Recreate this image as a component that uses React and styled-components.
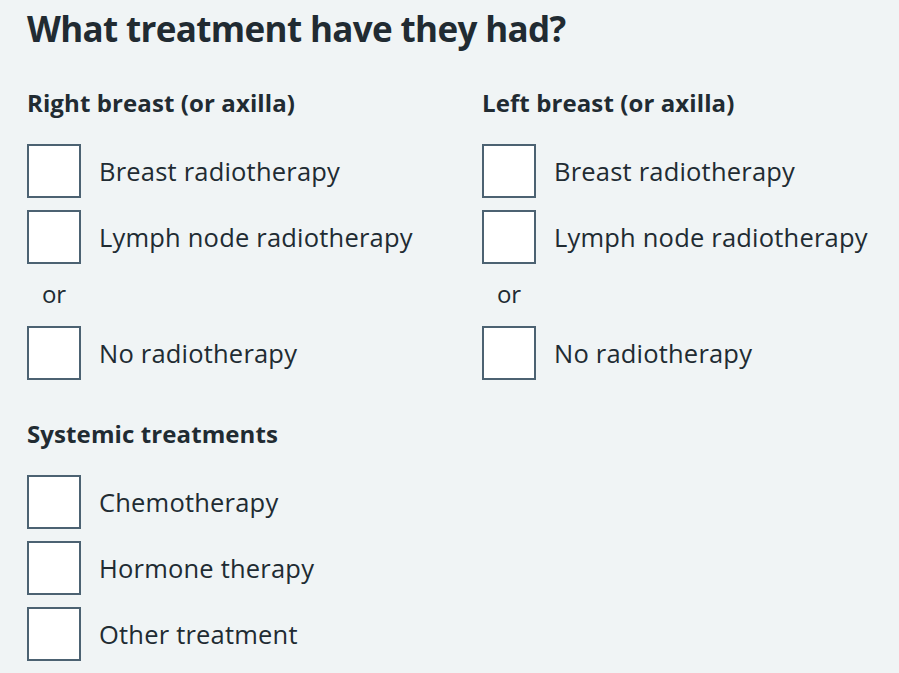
import React from 'react'
import styled, { createGlobalStyle } from 'styled-components'

const GlobalStyle = createGlobalStyle`
    body {
        margin: 0;
        background: #f0f4f5;
        color: #212b32;
        font-family: "Open Sans", "Liberation Sans", Arial, sans-serif;
    }
`

const Page = styled.div`
    padding: 8px 0 0 27px;
`

const Title = styled.h1`
    margin: 0 0 37px;
    font-size: 35px;
    line-height: 42px;
    font-weight: 700;
    letter-spacing: -0.65px;
`

const Columns = styled.div`
    display: grid;
    grid-template-columns: 455px 1fr;
`

const Group = styled.fieldset`
    margin: 0;
    padding: 0;
    border: 0;
    min-width: 0;
`

const Legend = styled.legend`
    padding: 0;
    margin-bottom: 25px;
    font-size: 24px;
    line-height: 32px;
    font-weight: 700;
    letter-spacing: 0.1px;
`

const List = styled.div`
    display: flex;
    flex-direction: column;
    gap: 12px;
`

const Item = styled.label`
    display: flex;
    align-items: center;
    gap: 18px;
    font-size: 25.5px;
    line-height: 32px;
    letter-spacing: 0.2px;
    cursor: pointer;
`

const Box = styled.span`
    flex: none;
    width: 50px;
    height: 50px;
    border: 2px solid #4c6272;
    background: #fff;
`

const Or = styled.div`
    width: 54px;
    margin: 14px 0 16px;
    text-align: center;
    font-size: 24px;
    line-height: 32px;
`

const Systemic = styled(Group)`
    margin-top: 38px;
`

const Checkboxes = ({ items }) => (
    <List>
        {items.map((label) => (
            <Item key={label}>
                <Box />
                {label}
            </Item>
        ))}
    </List>
)

const Breast = ({ side }) => (
    <Group>
        <Legend>{side} breast (or axilla)</Legend>
        <Checkboxes items={['Breast radiotherapy', 'Lymph node radiotherapy']} />
        <Or>or</Or>
        <Checkboxes items={['No radiotherapy']} />
    </Group>
)

const App = () => {
    return (
        <Page>
            <GlobalStyle />
            <Title>What treatment have they had?</Title>
            <Columns>
                <Breast side="Right" />
                <Breast side="Left" />
            </Columns>
            <Systemic>
                <Legend>Systemic treatments</Legend>
                <Checkboxes items={['Chemotherapy', 'Hormone therapy', 'Other treatment']} />
            </Systemic>
        </Page>
    )
}

export default App
